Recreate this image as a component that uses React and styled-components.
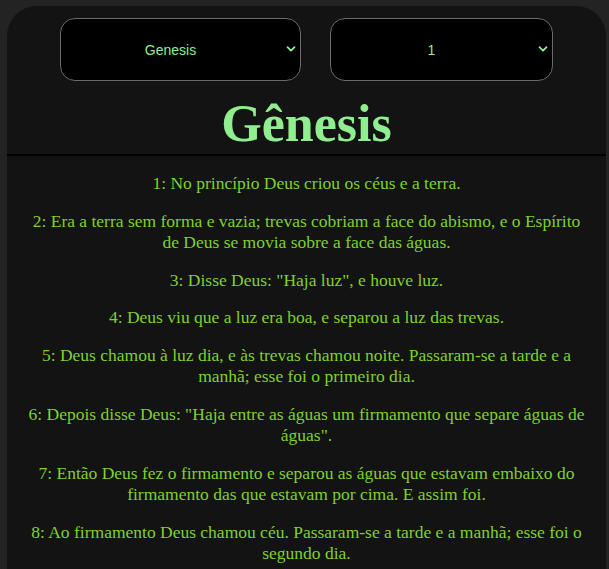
import React, { useState } from 'react';
import styled, { createGlobalStyle } from 'styled-components';

const GlobalStyle = createGlobalStyle`
  html, body {
    margin: 0;
    padding: 0;
    background-color: #232323;
  }
  body {
    font-family: "Liberation Serif", "Times New Roman", serif;
  }
`;

const Container = styled.div`
  margin: 6px 3px 0 7px;
  background-color: #131313;
  border-radius: 30px 30px 0 0;
  min-height: 600px;
  padding-top: 12px;
`;

const Controls = styled.div`
  display: flex;
  justify-content: center;
  gap: 29px;
`;

const SelectWrap = styled.div`
  position: relative;
  width: ${(p) => p.$width}px;
`;

const Select = styled.select`
  appearance: none;
  width: 100%;
  height: 63px;
  background-color: #000;
  color: #90ee90;
  border: 1px solid #6a6a6a;
  border-radius: 15px;
  font-family: "Liberation Sans", Arial, sans-serif;
  font-size: 14px;
  text-align: center;
  text-align-last: center;
  padding: 0 20px 0 0;
  outline: none;
  cursor: pointer;
`;

const Chevron = styled.svg`
  position: absolute;
  right: 5px;
  top: 26px;
  pointer-events: none;
`;

const Title = styled.h1`
  margin: 13px 0 0;
  text-align: center;
  color: #90ee90;
  font-family: "Liberation Serif", "Times New Roman", serif;
  font-weight: bold;
  font-size: 52px;
  line-height: 60px;
`;

const Divider = styled.hr`
  margin: 0;
  border: none;
  height: 2px;
  background-color: #000;
`;

const Verses = styled.div`
  padding: 17px 20px 0;
`;

const Verse = styled.p`
  margin: 0 0 16px;
  text-align: center;
  color: #7fd12c;
  font-size: 17.5px;
  line-height: 21.5px;
`;

const livros = ['Genesis', 'Exodo', 'Levitico', 'Numeros', 'Deuteronomio'];

const versiculos = [
  'No princípio Deus criou os céus e a terra.',
  'Era a terra sem forma e vazia; trevas cobriam a face do abismo, e o Espírito de Deus se movia sobre a face das águas.',
  'Disse Deus: "Haja luz", e houve luz.',
  'Deus viu que a luz era boa, e separou a luz das trevas.',
  'Deus chamou à luz dia, e às trevas chamou noite. Passaram-se a tarde e a manhã; esse foi o primeiro dia.',
  'Depois disse Deus: "Haja entre as águas um firmamento que separe águas de águas".',
  'Então Deus fez o firmamento e separou as águas que estavam embaixo do firmamento das que estavam por cima. E assim foi.',
  'Ao firmamento Deus chamou céu. Passaram-se a tarde e a manhã; esse foi o segundo dia.',
];

const ChevronIcon = () => (
  <Chevron width="10" height="10" viewBox="0 0 10 10">
    <path d="M1.5 3.2 L5 6.7 L8.5 3.2" fill="none" stroke="#90ee90" strokeWidth="1.8" strokeLinecap="round" strokeLinejoin="round" />
  </Chevron>
);

const App = () => {
  const [livro, setLivro] = useState('Genesis');
  const [capitulo, setCapitulo] = useState('1');

  return (
    <>
      <GlobalStyle />
      <Container>
        <Controls>
          <SelectWrap $width={241}>
            <Select value={livro} onChange={(e) => setLivro(e.target.value)}>
              {livros.map((l) => (
                <option key={l} value={l}>{l}</option>
              ))}
            </Select>
            <ChevronIcon />
          </SelectWrap>
          <SelectWrap $width={223}>
            <Select value={capitulo} onChange={(e) => setCapitulo(e.target.value)}>
              {Array.from({ length: 50 }, (_, i) => (
                <option key={i} value={String(i + 1)}>{i + 1}</option>
              ))}
            </Select>
            <ChevronIcon />
          </SelectWrap>
        </Controls>
        <Title>Gênesis</Title>
        <Divider />
        <Verses>
          {versiculos.map((v, i) => (
            <Verse key={i}>{i + 1}: {v}</Verse>
          ))}
        </Verses>
      </Container>
    </>
  );
};

export default App;
